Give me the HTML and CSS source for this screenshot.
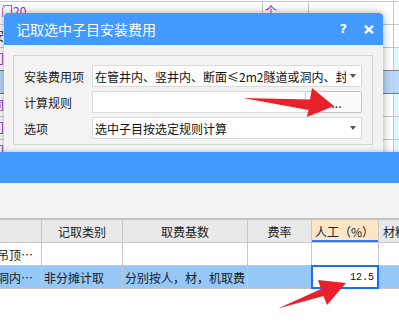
FILE: index.html
```html
<!DOCTYPE html>
<html lang="zh-CN">
<head>
<meta charset="utf-8">
<title>记取选中子目安装费用</title>
<link rel="stylesheet" href="styles.css">
</head>
<body>
<div class="screen">
  <div class="sheet">
    <div class="srow first">
      <div class="sc sc-a"><span class="tx purple">门20</span></div>
      <div class="sc sc-b"><span class="tx purple">个</span></div>
      <div class="sc sc-c"></div>
      <div class="sc sc-d"></div>
    </div>
    <div class="srow">
      <div class="sc sc-a"><span class="tx tail">安</span></div>
      <div class="sc sc-b"></div>
      <div class="sc sc-c"></div>
      <div class="sc sc-d"></div>
    </div>
    <div class="srow cy pre-sel">
      <div class="sc sc-a"><span class="tx tail purple">门</span></div>
      <div class="sc sc-b"></div>
      <div class="sc sc-c"></div>
      <div class="sc sc-d"></div>
    </div>
    <div class="srow cy sel">
      <div class="sc sc-a"><span class="tx tail">：</span></div>
      <div class="sc sc-b"></div>
      <div class="sc sc-c"></div>
      <div class="sc sc-d"></div>
    </div>
    <div class="srow cy">
      <div class="sc sc-a"><span class="tx tail purple">同</span></div>
      <div class="sc sc-b"></div>
      <div class="sc sc-c"></div>
      <div class="sc sc-d"></div>
    </div>
    <div class="srow cy">
      <div class="sc sc-a"><span class="tx tail purple">门</span></div>
      <div class="sc sc-b"></div>
      <div class="sc sc-c"></div>
      <div class="sc sc-d"></div>
    </div>
    <div class="srow cy">
      <div class="sc sc-a"><span class="tx tail purple">门</span></div>
      <div class="sc sc-b"></div>
      <div class="sc sc-c"></div>
      <div class="sc sc-d"></div>
    </div>

    <div class="dialog">
      <div class="dlg-title">
        <span class="dlg-title-text">记取选中子目安装费用</span>
        <span class="dlg-help">?</span>
        <svg class="dlg-close" width="10" height="9" viewBox="0 0 10 9">
          <path d="M1 0.8 L9 8.2 M9 0.8 L1 8.2" stroke="#fff" stroke-width="2.3" fill="none"/>
        </svg>
      </div>
      <div class="dlg-body">
        <div class="group">
          <div class="lbl">安装费用项</div>
          <div class="field">
            <span class="ftext">在管井内、竖井内、断面≤2m2隧道或洞内、封闭吊顶内</span>
            <span class="caret"></span>
          </div>
          <div class="lbl">计算规则</div>
          <div class="field-split">
            <div class="input"></div>
            <div class="btn">...</div>
          </div>
          <div class="lbl">选项</div>
          <div class="field">
            <span class="ftext">选中子目按选定规则计算</span>
            <span class="caret"></span>
          </div>
        </div>
      </div>
    </div>
  </div>

  <div class="lower">
    <div class="lower-title"></div>
    <div class="lower-tools"></div>
    <div class="table">
      <div class="grid">
        <div class="th"></div>
        <div class="th">记取类别</div>
        <div class="th">取费基数</div>
        <div class="th">费率</div>
        <div class="th active">人工（%）</div>
        <div class="th left">材料（%）</div>

        <div class="td clip"><span>在管井内、竖井内、断面≤2m2隧道或洞内、封闭吊顶⋯</span></div>
        <div class="td"></div>
        <div class="td"></div>
        <div class="td"></div>
        <div class="td"></div>
        <div class="td"></div>

        <div class="td sel clip"><span>在管井内、竖井内、断面≤2m2隧道或洞内⋯</span></div>
        <div class="td sel">非分摊计取</div>
        <div class="td sel">分别按人，材，机取费</div>
        <div class="td sel"></div>
        <div class="td edit">12.5</div>
        <div class="td sel"></div>
      </div>
    </div>
  </div>

  <svg class="arrows" width="399" height="326" viewBox="0 0 399 326">
    <polygon points="243,98 310,99.5 312,88 334,106 307,117 308.5,110" fill="#e8212b"/>
    <polygon points="278,308.5 321,289 318,280 346,283 327,305 323.5,296" fill="#e8212b"/>
  </svg>
</div>
</body>
</html>
```

FILE: styles.css
```css
* { box-sizing: border-box; }
html, body { margin: 0; padding: 0; }
body {
  width: 399px;
  height: 326px;
  overflow: hidden;
  background: #fff;
  font-family: "Noto Sans CJK SC", "Noto Sans", sans-serif;
  font-size: 12px;
  color: #222;
}
.screen {
  position: relative;
  width: 399px;
  height: 326px;
  overflow: hidden;
  background: #fff;
}

/* background spreadsheet */
.sheet {
  position: relative;
  height: 152px;
  overflow: hidden;
  padding-top: 1px;
  background: #fff;
}
.srow {
  display: grid;
  grid-template-columns: 263px 46px 85px 1fr;
  height: 23px;
  border-bottom: 1px solid #c9c9c9;
}
.srow.first {
  height: 24px;
  border-top: 1px solid #c9c9c9;
}
.srow.first .tx { line-height: 16px; }
.srow.pre-sel { border-bottom-color: #7c7c7c; }
.srow.sel { background: #b9d7f8; border-bottom-color: #7c7c7c; }
.srow.cy .sc-d { background: #e2f8f8; }
.srow.sel .sc-d { background: #b9d7f8; }
.sc {
  border-right: 1px solid #c9c9c9;
  overflow: hidden;
  white-space: nowrap;
}
.sc-d { border-right: none; }
.tx {
  display: inline-block;
  font-size: 12px;
  line-height: 22px;
  padding-left: 1px;
}
.sc-b .tx { padding-left: 2px; }
.tx.tail { margin-left: -8px; padding-left: 0; }
.purple { color: #9b32c6; }

/* dialog */
.dialog {
  position: absolute;
  left: 4px;
  top: 13px;
  width: 379px;
  height: 160px;
  background: #f3f3f3;
  border-radius: 4px 4px 0 0;
  box-shadow: 0 0 8px rgba(0, 0, 0, 0.35);
}
.dlg-title {
  height: 32px;
  background: #4299ff;
  border-radius: 4px 4px 0 0;
  display: flex;
  align-items: center;
  padding: 0 9px 0 12px;
  color: #fff;
}
.dlg-title-text {
  flex: 1;
  font-size: 14px;
  line-height: 32px;
}
.dlg-help {
  font-family: "DejaVu Sans", sans-serif;
  font-weight: bold;
  font-size: 13px;
  line-height: 14px;
  margin-right: 17px;
}
.dlg-close { display: block; }
.dlg-body {
  padding: 10px 10px 0 9px;
}
.group {
  border: 1px solid #d6d6d6;
  padding: 9px 10px 5px 10px;
  display: grid;
  grid-template-columns: 68px 1fr;
  grid-auto-rows: 22px;
  row-gap: 4px;
  align-items: center;
}
.lbl {
  font-size: 12px;
  color: #222;
  white-space: nowrap;
}
.field {
  height: 22px;
  border: 1px solid #dadada;
  background: #fff;
  display: flex;
  align-items: center;
  padding-left: 2px;
  min-width: 0;
}
.ftext {
  flex: 1;
  min-width: 0;
  overflow: hidden;
  white-space: nowrap;
  color: #111;
  margin-right: 4px;
}
.caret {
  flex: none;
  width: 0;
  height: 0;
  border-left: 3.5px solid transparent;
  border-right: 3.5px solid transparent;
  border-top: 4px solid #555;
  margin-right: 5px;
}
.field-split {
  height: 22px;
  display: flex;
}
.input {
  flex: 1;
  border: 1px solid #dadada;
  border-right: none;
  background: #fff;
}
.btn {
  width: 57px;
  border: 1px solid #c6c6c6;
  border-radius: 2px;
  background: #fcfcfc;
  display: flex;
  align-items: center;
  justify-content: center;
  padding-left: 6px;
  font-size: 12px;
  color: #222;
}

/* lower window */
.lower {
  position: relative;
  z-index: 1;
  height: 174px;
  background: #fff;
  box-shadow: 0 -1px 4px rgba(0, 0, 0, 0.18);
}
.lower-title {
  height: 31px;
  background: #4299ff;
}
.lower-tools {
  height: 35px;
  background: #f3f3f3;
}
.table {
  border-top: 2px solid #c4c4c4;
  background: #fff;
}
.grid {
  display: grid;
  grid-template-columns: 41px 80px 124px 63px 66px 1fr;
  grid-auto-rows: 22px;
  gap: 1px;
  background: #c8c8c8;
  border-bottom: 1px solid #c8c8c8;
}
.th {
  background: #e9e9e9;
  display: flex;
  align-items: center;
  justify-content: center;
  white-space: nowrap;
  overflow: hidden;
  color: #222;
}
.th.active {
  background: #fde5c6;
  justify-content: flex-start;
  padding-left: 3px;
  box-shadow: inset 0 -2px 0 #2e7cf6;
}
.th.left {
  justify-content: flex-start;
  padding-left: 4px;
}
.td {
  background: #fff;
  display: flex;
  align-items: center;
  padding-left: 2px;
  white-space: nowrap;
  overflow: hidden;
  color: #1a1a1a;
}
.td.sel { background: #95c8f7; }
.td.clip {
  justify-content: flex-end;
  padding-left: 0;
  padding-right: 8px;
}
.td.clip span { flex: none; }
.td.edit {
  position: relative;
  z-index: 1;
  background: #fff;
  justify-content: flex-end;
  padding-right: 4px;
  outline: 1px solid #1a6ef5;
  box-shadow: inset 0 0 0 1px #1a6ef5;
  font-family: "Liberation Mono", "DejaVu Sans Mono", monospace;
  font-size: 10px;
  color: #111;
  overflow: visible;
}

/* annotation arrows */
.arrows {
  position: absolute;
  left: 0;
  top: 0;
  z-index: 5;
  pointer-events: none;
}
```
